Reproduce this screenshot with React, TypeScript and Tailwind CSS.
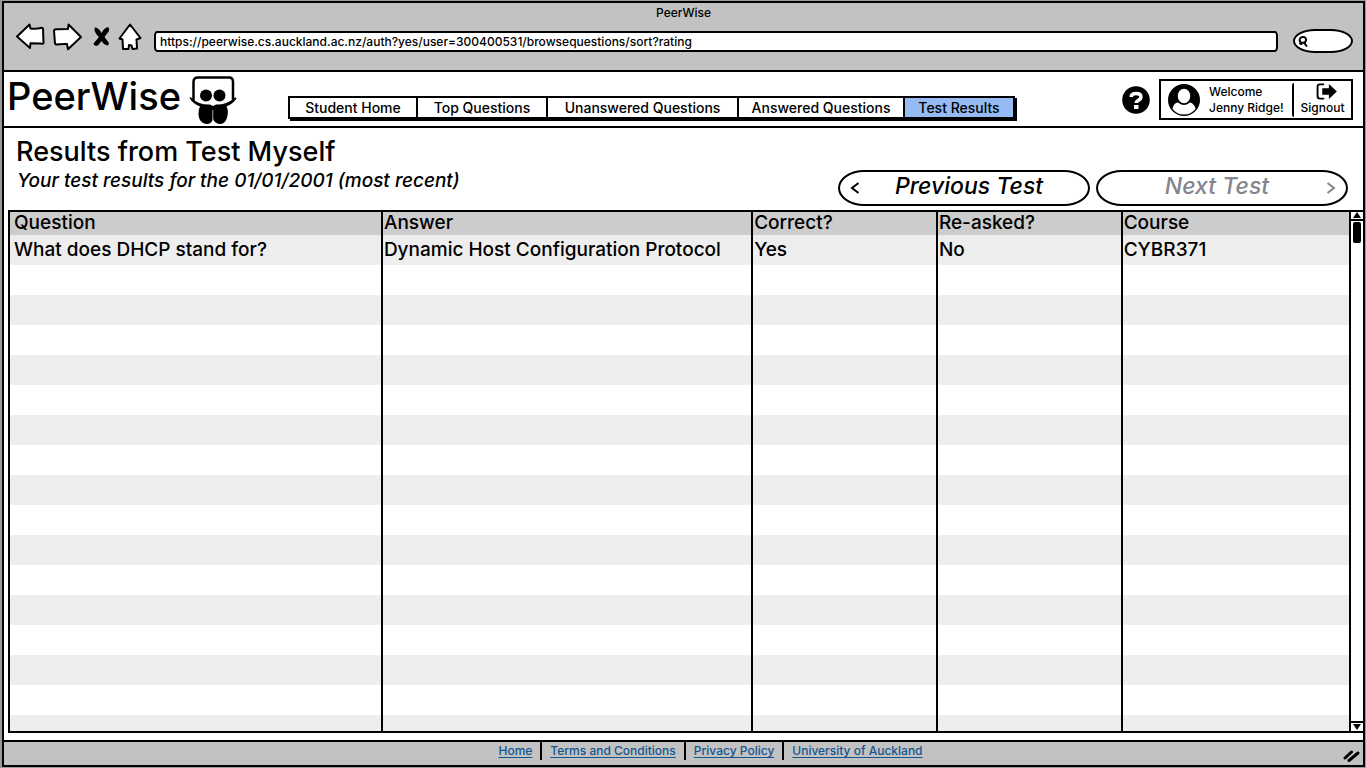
import React from "react";

const navItems = [
  { label: "Student Home", width: "w-[128px]", active: false },
  { label: "Top Questions", width: "w-[130px]", active: false },
  { label: "Unanswered Questions", width: "w-[191px]", active: false },
  { label: "Answered Questions", width: "w-[166px]", active: false },
  { label: "Test Results", width: "w-[108px]", active: true },
];

const columns = [
  { label: "Question", width: "w-[27.85%]" },
  { label: "Answer", width: "w-[27.65%]" },
  { label: "Correct?", width: "w-[13.8%]" },
  { label: "Re-asked?", width: "w-[13.8%]" },
  { label: "Course", width: "w-[16.9%]" },
];

const results = [
  ["What does DHCP stand for?", "Dynamic Host Configuration Protocol", "Yes", "No", "CYBR371"],
];

const rows = [...results, ...Array.from({ length: 16 }, () => ["", "", "", "", ""])];

const footerLinks = ["Home", "Terms and Conditions", "Privacy Policy", "University of Auckland"];

function Toolbar() {
  return (
    <div className="h-[69px] shrink-0 border-b-2 border-black bg-[#c2c2c2]">
      <p className="h-5 text-center text-[12px] leading-5 font-medium">PeerWise</p>
      <div className="flex h-7 items-center pr-[10px] pl-3">
        <button type="button" aria-label="Back" className="mr-2">
          <svg width="29" height="28" viewBox="0 0 29 28" fill="#fff" stroke="#000" strokeWidth="2" strokeLinejoin="round">
            <path d="M1 13.500 13.500 1.500 14.500 5.500Q20 6.200 26 4.800L27 5.500 27.500 20Q27 21.200 25 20.600L14.500 20.200 14 25Z" />
          </svg>
        </button>
        <button type="button" aria-label="Forward" className="mr-2.5">
          <svg width="29" height="28" viewBox="0 0 29 28" fill="#fff" stroke="#000" strokeWidth="2" strokeLinejoin="round">
            <path d="M1 7.500Q1.500 5.800 4 6.300L15 6 15.500 1.500 28 14 15 26.200 14 21Q8 20.800 3 21.600L2 20.500Z" />
          </svg>
        </button>
        <button type="button" aria-label="Stop" className="mr-2">
          <svg width="18" height="22" viewBox="0 0 18 22" fill="#000">
            <path d="M3 1.500Q6.500 1.500 9.500 7 12 2 16 1 18.500 4 15.500 7L12.500 11 17 17 16 19.500Q12 19 9.500 15L6 19.500Q1.500 20.500 1.500 17.500L7 11Q1 5.500 3 1.500Z" />
          </svg>
        </button>
        <button type="button" aria-label="Home page" className="mr-3">
          <svg width="24" height="28" viewBox="0 0 24 28" fill="#fff" stroke="#000" strokeWidth="2" strokeLinejoin="round">
            <path d="M1.500 15.500 12 1.500 22.500 15 18.500 16.500 19 25.500 14.500 26 13.500 22.500 11 22 10.500 26 5 26 4.500 16.500Z" />
          </svg>
        </button>
        <input
          type="text"
          aria-label="Address"
          defaultValue="https://peerwise.cs.auckland.ac.nz/auth?yes/user=300400531/browsequestions/sort?rating"
          className="mt-2 h-[21px] min-w-0 flex-1 rounded-[3px/5px] border-2 border-black bg-white px-1 text-[12px] font-medium outline-none"
        />
        <label className="mt-2 ml-[15px] flex h-6 w-[60px] items-center rounded-[22px/12px] border-2 border-black bg-white pl-0.5">
          <svg width="12" height="13" viewBox="0 0 12 13" fill="none" stroke="#000" strokeWidth="2" strokeLinecap="round">
            <path d="M5.500 2C8 1.500 9.500 3.500 9 5.500 8.500 8 5 8.500 3.500 7 1.500 5 3 2.500 5.500 2ZM7.500 8 9.500 11M3 8.500 4.500 9" />
          </svg>
          <input type="text" aria-label="Search" className="w-8 min-w-0 bg-transparent text-xs outline-none" />
        </label>
      </div>
    </div>
  );
}

function Mascot() {
  return (
    <svg width="48" height="50" viewBox="0 0 48 50" aria-hidden="true">
      <path d="M4.500 26V7Q4.500 2.500 9 2.500H40Q44 2.500 44 7V26" fill="#fff" stroke="#000" strokeWidth="2.500" />
      <path d="M.5 23Q1.500 21.500 3 23.500 10 30 21 29.500L24 31 27 29.500Q37 30 45 23.500 47 21.500 47.500 23.500 44 29 37.500 31.500 39.500 35 38.500 41 36.500 49.500 30.500 49 26 48.500 24 44 22.500 49.500 17 49 10.500 48 9.500 40 9 35 11 31.500 4 29 .5 23Z" fill="#000" />
      <circle cx="17" cy="20.500" r="6" />
      <circle cx="30.500" cy="20.500" r="6" />
      <path d="M23.800 35V46" stroke="#aaa" strokeWidth="1" />
    </svg>
  );
}

function Header() {
  return (
    <header className="flex h-14 shrink-0 border-b-2 border-black pr-[10px] pl-[3px]">
      <h1 className="w-[182px] text-[38px] leading-12 font-medium whitespace-nowrap">PeerWise</h1>
      <div className="pt-[3px]">
        <Mascot />
      </div>
      <nav className="mt-6 ml-[51px] flex h-[23px] shrink-0 border-2 border-black shadow-[2px_2px_0_#000]">
        {navItems.map((item) => (
          <a
            key={item.label}
            href="#"
            className={`${item.width} ${item.active ? "bg-[#95bbf2]" : "bg-white"} border-r-2 border-black text-center text-[14px] leading-5 font-medium whitespace-nowrap last:border-r-0`}
          >
            {item.label}
          </a>
        ))}
      </nav>
      <button type="button" aria-label="Help" className="mt-[14px] mr-[9px] ml-auto h-7 w-7">
        <svg width="28" height="28" viewBox="0 0 28 28">
          <circle cx="14" cy="14" r="13.800" />
          <path d="M9 11Q9.500 7.500 14 7.500 19 7.500 19 11.200C19 14 14.500 14 14.300 17" fill="none" stroke="#fff" strokeWidth="3.500" />
          <rect x="12" y="19" width="4.500" height="4" fill="#fff" />
        </svg>
      </button>
      <div className="mt-[7px] flex h-[41px] w-[194px] items-center border-2 border-black">
        <svg width="32" height="32" viewBox="0 0 32 32" className="ml-[7px] shrink-0">
          <circle cx="16" cy="16" r="16" />
          <path d="M4.500 25Q5.500 18.500 10 18.500 16 23 22 18.500 26.500 19.500 27.500 25 23 30.500 16 30.500 9 30.500 4.500 25Z" fill="#fff" />
          <ellipse cx="16" cy="12" rx="7" ry="8" fill="#fff" stroke="#000" strokeWidth="1.500" />
        </svg>
        <p className="ml-[9px] w-[83px] text-[12px] leading-4 font-medium whitespace-nowrap">
          Welcome
          <br />
          Jenny Ridge!
        </p>
        <button type="button" className="flex h-[34px] flex-1 flex-col items-center rounded-[2px] border-l-2 border-black text-[12px] leading-4 font-medium">
          <svg width="22" height="17" viewBox="0 0 22 18" className="mr-[-9px] shrink-0">
            <path d="M8 1.500H3.500Q1 1.500 1 4V14Q1 16.500 3.500 16.500H8" fill="none" stroke="#000" strokeWidth="2" />
            <path d="M6 5.500H13V1L21.500 9 13 17V12.500H6Z" />
          </svg>
          Signout
        </button>
      </div>
    </header>
  );
}

function ResultsTable() {
  return (
    <div className="ml-1 flex min-h-0 flex-1 border-2 border-r-0 border-black">
      <div className="min-w-0 flex-1 overflow-hidden">
        <table className="w-full table-fixed border-separate border-spacing-0 text-[19px] font-medium">
          <thead>
            <tr className="h-[23px] bg-[#ccc] text-left">
              {columns.map((column) => (
                <th key={column.label} className={`${column.width} border-r-2 border-black p-0 pl-px align-top leading-[22px] font-medium first:pl-1 last:border-r-0`}>
                  {column.label}
                </th>
              ))}
            </tr>
          </thead>
          <tbody>
            {rows.map((row, index) => (
              <tr key={index} className="h-[30px] odd:bg-[#eee] even:bg-white">
                {row.map((cell, cellIndex) => (
                  <td key={cellIndex} className="border-r-2 border-black p-0 pl-px align-top leading-[30px] first:pl-1 last:border-r-0">
                    {cell}
                  </td>
                ))}
              </tr>
            ))}
          </tbody>
        </table>
      </div>
      <div className="flex w-[14px] shrink-0 flex-col items-center justify-between border-l-2 border-black bg-white">
        <div className="flex w-full flex-col items-center">
          <button type="button" aria-label="Scroll up" className="flex h-[9px] w-full justify-center border-b-2 border-black">
            <svg width="8" height="6" viewBox="0 0 8 6">
              <path d="M4 0 8 6H0Z" />
            </svg>
          </button>
          <div className="mt-px h-[21px] w-2 rounded-[2px] bg-black" />
        </div>
        <button type="button" aria-label="Scroll down" className="flex h-[10px] w-full items-center justify-center border-t-2 border-black">
          <svg width="8" height="6" viewBox="0 0 8 6">
            <path d="M4 6 8 0H0Z" />
          </svg>
        </button>
      </div>
    </div>
  );
}

function Footer() {
  return (
    <footer className="mt-[7px] flex h-[25px] shrink-0 items-start border-t-2 border-black bg-[#c2c2c2]">
      <nav aria-label="Footer" className="flex flex-1 justify-center pl-[74px] text-[12px] leading-[18px] font-medium text-[#145590]">
        {footerLinks.map((link) => (
          <span key={link} className="border-r-2 border-black px-2 last:border-r-0">
            <a href="#" className="underline underline-offset-2">
              {link}
            </a>
          </span>
        ))}
      </nav>
      <svg width="18" height="16" viewBox="0 0 18 16" className="mt-1.5 mr-0.5" stroke="#000" strokeWidth="3" strokeLinecap="round">
        <path d="M2 10 8.500 4M6 12.500 15 5" />
      </svg>
    </footer>
  );
}

export default function App() {
  return (
    <div className="h-screen min-h-[400px] bg-[#999] pt-px pr-px pb-px pl-0.5 font-['Inter','Open_Sans',sans-serif] text-black">
      <div className="flex h-full flex-col border-2 border-black bg-white">
        <Toolbar />
        <Header />
        <main className="flex min-h-0 flex-1 flex-col">
          <div className="flex h-[82px] shrink-0 justify-between pr-[15px] pl-3">
            <div className="pt-2">
              <h2 className="text-[27px] leading-8 font-medium">Results from Test Myself</h2>
              <p className="pl-px text-[19px] leading-[26px] font-medium italic">Your test results for the 01/01/2001 (most recent)</p>
            </div>
            <div className="mt-[42px] flex h-9 gap-1.5">
              <button type="button" className="flex w-[252px] items-center rounded-[26px/18px] border-2 border-black bg-white px-[10px] pb-1 text-[23px] font-medium italic">
                <svg width="10" height="12" viewBox="0 0 10 12" fill="none" stroke="currentColor" strokeWidth="2" className="mt-1">
                  <path d="M8.500 1 2 6 8.500 11" />
                </svg>
                <span className="flex-1">Previous Test</span>
              </button>
              <button type="button" disabled className="flex w-[252px] items-center rounded-[26px/18px] border-2 border-black bg-white px-[10px] pb-1 text-[23px] font-medium text-[#86858f] italic">
                <span className="flex-1">Next Test</span>
                <svg width="10" height="12" viewBox="0 0 10 12" fill="none" stroke="currentColor" strokeWidth="2" className="mt-1">
                  <path d="M1.500 1 8 6 1.500 11" />
                </svg>
              </button>
            </div>
          </div>
          <ResultsTable />
        </main>
        <Footer />
      </div>
    </div>
  );
}
